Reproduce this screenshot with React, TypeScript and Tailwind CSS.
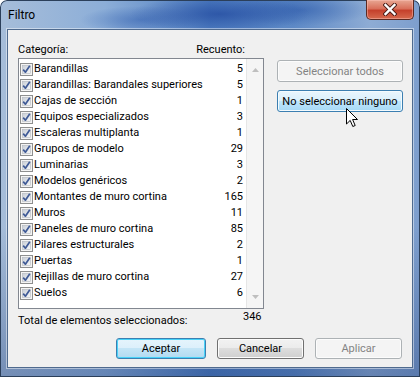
import React from "react";

const rows: [string, number][] = [
  ["Barandillas", 5],
  ["Barandillas: Barandales superiores", 5],
  ["Cajas de sección", 1],
  ["Equipos especializados", 3],
  ["Escaleras multiplanta", 1],
  ["Grupos de modelo", 29],
  ["Luminarias", 3],
  ["Modelos genéricos", 2],
  ["Montantes de muro cortina", 165],
  ["Muros", 11],
  ["Paneles de muro cortina", 85],
  ["Pilares estructurales", 2],
  ["Puertas", 1],
  ["Rejillas de muro cortina", 27],
  ["Suelos", 6],
];

// Win7 style checked checkbox
const CheckBox = () => (
  <svg width="13" height="13" viewBox="0 0 13 13" className="shrink-0">
    <defs>
      <linearGradient id="cbg" x1="0" y1="0" x2="1" y2="1">
        <stop offset="0" stopColor="#c9ced6" />
        <stop offset="1" stopColor="#f7f8f9" />
      </linearGradient>
    </defs>
    <rect x="0.5" y="0.5" width="12" height="12" fill="#f4f4f4" stroke="#8e8f8f" />
    <rect x="2.5" y="2.5" width="8" height="8" fill="url(#cbg)" stroke="#b3b8bf" strokeWidth="0.6" />
    <path d="M3.2 6.6 L5.4 9.2 L9.8 2.8" fill="none" stroke="#3f5a96" strokeWidth="1.7" strokeLinejoin="round" />
  </svg>
);

const btnBase =
  "flex items-center justify-center rounded-[3px] border text-[11px] leading-none";
const btnNormal =
  "border-[#707070] bg-[linear-gradient(180deg,#f2f2f2_0%,#ebebeb_49%,#dddddd_50%,#cfcfcf_100%)] text-black shadow-[inset_0_0_0_1px_#fcfcfc]";
const btnHover =
  "border-[#3c7fb1] bg-[linear-gradient(180deg,#eaf6fd_0%,#d9f0fc_49%,#bee6fd_50%,#a7d9f5_100%)] text-black shadow-[inset_0_0_0_1px_#f4fbfe]";
const btnDefault =
  "border-[#3c7fb1] bg-[linear-gradient(180deg,#e5f4fc_0%,#dcf0fb_49%,#c4e5f6_50%,#b2daf1_100%)] text-black shadow-[inset_0_0_0_1px_#48d2f8]";
const btnDisabled =
  "border-[#adb2b5] bg-[#f4f4f4] text-[#838383] shadow-[inset_0_0_0_1px_#fcfcfc]";

export default function App() {
  return (
    <div className="w-[420px] h-[377px] bg-white font-['Roboto','Liberation_Sans',sans-serif] text-[11px] text-black">
      <div className="relative w-full h-full rounded-t-[7px] overflow-hidden flex flex-col shadow-[inset_0_0_0_1px_#2b3f5a] bg-[linear-gradient(180deg,rgba(0,0,0,0)_0%,rgba(0,0,0,0)_60%,rgba(25,55,115,0.35)_100%),radial-gradient(ellipse_90px_18px_at_220px_14px,rgba(35,75,160,0.75),transparent),radial-gradient(ellipse_70px_16px_at_300px_10px,rgba(45,90,170,0.6),transparent),radial-gradient(ellipse_60px_14px_at_140px_20px,rgba(50,95,175,0.55),transparent),linear-gradient(90deg,#a6bdd9_0%,#8caed8_25%,#4d7cc0_50%,#5d89c6_70%,#8eacd4_88%,#7d9ecd_100%)]">
        {/* title bar */}
        <div className="h-[29px] shrink-0 flex items-start pl-[8px] pt-[7px]">
          <span className="text-[12px] leading-[16px] text-black">Filtro</span>
        </div>

        {/* close button */}
        <div className="absolute top-0 right-[6px] w-[48px] h-[20px] rounded-b-[5px] border border-t-0 border-[#5b2a22] bg-[linear-gradient(180deg,#e8a793_0%,#d9705b_45%,#c5412c_55%,#d66a4e_100%)] shadow-[inset_0_0_0_1px_rgba(255,200,190,0.45)] flex items-center justify-center">
          <svg width="14" height="13" viewBox="0 0 14 13">
            <path d="M2.5 2 L11.5 11 M11.5 2 L2.5 11" stroke="#4a1d18" strokeWidth="4.2" strokeLinecap="square" />
            <path d="M2.5 2 L11.5 11 M11.5 2 L2.5 11" stroke="#ffffff" strokeWidth="2.4" strokeLinecap="square" />
          </svg>
        </div>

        {/* client area */}
        <div className="flex-1 mx-[7px] mb-[9px] border border-[#4f6a8e] bg-[#f0f0f0] shadow-[0_0_0_1px_rgba(255,255,255,0.45)] flex flex-col">
          <div className="flex pl-[10px] pt-[10px]">
            <div className="w-[246px] flex flex-col">
              <div className="h-[18px] flex items-start justify-between pr-[19px] pt-[2px] leading-[16px]">
                <span>Categoría:</span>
                <span>Recuento:</span>
              </div>
              <div className="h-[251px] border border-[#828790] bg-white flex">
                <div className="flex-1 pt-[2px] pl-[1px]">
                  {rows.map(([name, n]) => (
                    <div key={name} className="h-[16px] flex items-center">
                      <CheckBox />
                      <span className="ml-[1px] flex-1 leading-[16px] whitespace-nowrap">{name}</span>
                      <span className="pr-[3px] leading-[16px]">{n}</span>
                    </div>
                  ))}
                </div>
                <div className="w-[17px] border-l border-[#e6e6e6] bg-[#f5f5f5] flex flex-col justify-between items-center py-[9px]">
                  <svg width="7" height="4" viewBox="0 0 7 4">
                    <path d="M0 4 L3.5 0 L7 4 Z" fill="#bfbfbf" />
                  </svg>
                  <svg width="7" height="4" viewBox="0 0 7 4">
                    <path d="M0 0 L3.5 4 L7 0 Z" fill="#bfbfbf" />
                  </svg>
                </div>
              </div>
            </div>
            <div className="ml-[13px] pt-[20px] flex flex-col gap-[8px]">
              <div className={`${btnBase} ${btnDisabled} w-[126px] h-[22px]`}>Seleccionar todos</div>
              <div className={`${btnBase} ${btnHover} w-[126px] h-[22px]`}>No seleccionar ninguno</div>
            </div>
          </div>

          <div className="flex pl-[10px] mt-[3px] h-[20px] items-start">
            <span className="w-[225px] pt-[1px] leading-[16px]">Total de elementos seleccionados:</span>
            <span className="-mt-[3px] leading-[16px]">346</span>
          </div>

          <div className="flex justify-end gap-[11px] pr-[10px] mt-[6px]">
            <div className={`${btnBase} ${btnDefault} w-[90px] h-[21px]`}>Aceptar</div>
            <div className={`${btnBase} ${btnNormal} w-[87px] h-[21px]`}>Cancelar</div>
            <div className={`${btnBase} ${btnDisabled} w-[87px] h-[21px]`}>Aplicar</div>
          </div>
        </div>

        {/* mouse pointer */}
        <svg className="absolute left-[346px] top-[108px]" width="13" height="20" viewBox="0 0 13 20">
          <path d="M0.5 0.5 L0.5 16 L4.2 12.4 L6.8 18.5 L9.2 17.5 L6.6 11.5 L11.5 11.5 Z" fill="#ffffff" stroke="#000000" strokeWidth="1" strokeLinejoin="round" />
        </svg>
      </div>
    </div>
  );
}
